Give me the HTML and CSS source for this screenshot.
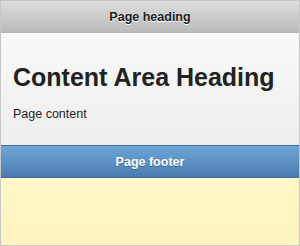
FILE: index.html
```html
<!DOCTYPE html>
<html lang="en">
<head>
    <meta charset="UTF-8">
    <meta name="viewport" content="width=device-width, initial-scale=1.0">
    <title>Page</title>
    <link rel="stylesheet" href="styles.css">
</head>
<body>
    <div class="page">
        <div class="bar header">Page heading</div>
        <div class="content">
            <h2>Content Area Heading</h2>
            <p>Page content</p>
        </div>
        <div class="bar footer">Page footer</div>
        <div class="fill"></div>
    </div>
</body>
</html>
```
FILE: styles.css
```css
body { margin: 0; padding: 0; font-family: 'Liberation Sans', Arial, sans-serif; }
.page {
    width: 300px; height: 246px; box-sizing: border-box;
    border: 1px solid #c6c6c6; border-top: none;
    display: flex; flex-direction: column;
    overflow: hidden;
}
.bar {
    display: flex; align-items: center; justify-content: center;
    font-size: 12.5px; font-weight: bold;
    box-sizing: border-box;
}
.header {
    height: 33px;
    background: linear-gradient(#dddddd, #bbbbbb);
    border-top: 1px solid #c6c6c6;
    border-bottom: 1px solid #b3b3b3;
    color: #222;
    text-shadow: 0 1px 0 #fff;
}
.content {
    height: 112px; box-sizing: border-box;
    padding: 1px 12px 0;
    background: linear-gradient(#f9f9f9, #eeeeee);
    color: #222;
}
.content h2 { font-size: 25px; margin: 28px 0 0; line-height: 30px; white-space: nowrap; }
.content p { font-size: 12.5px; margin: 13px 0 0; line-height: 18px; }
.footer {
    height: 33px;
    background: linear-gradient(#6fa6d6, #4a7bb0);
    border-top: 1px solid #456f9a;
    border-bottom: 1px solid #41699a;
    color: #fff;
    text-shadow: 0 1px 0 #3e6790;
}
.fill { flex: 1; background: linear-gradient(#fff8c8, #fff3bf); }
```
